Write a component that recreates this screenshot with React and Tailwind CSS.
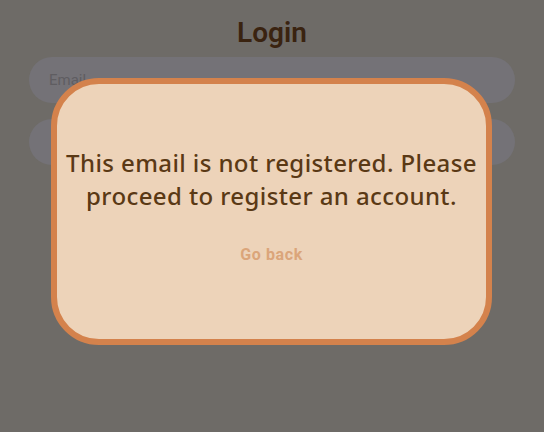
export default function App() {
  return (
    <div className="relative h-[432px] w-[544px] overflow-hidden bg-[#6e6b67] font-['Roboto',sans-serif]">
      {/* login page behind the overlay */}
      <div className="flex flex-col items-center px-[29px] pt-[15px]">
        <h1 className="text-[28px] font-semibold leading-[36px] text-[#3a2310]">Login</h1>
        <div className="mt-[6px] flex h-[46px] w-full items-center rounded-full bg-[#747277] px-[20px]">
          <span className="text-[15px] text-[#5f5d61]">Email</span>
        </div>
        <div className="mt-[16px] h-[46px] w-full rounded-full bg-[#747277]" />
      </div>

      {/* dialog */}
      <div className="absolute left-[51px] top-[78px] flex h-[267px] w-[441px] flex-col items-center rounded-[48px] border-[6px] border-[#d4824c] bg-[#edd3b9] pt-[62px]">
        <p className="text-center font-['Noto_Sans',sans-serif] text-[24px] font-medium leading-[33px] tracking-[0.4px] text-[#5a3915]">
          This email is not registered. Please
          <br />
          proceed to register an account.
        </p>
        <button className="mt-[31px] text-[16px] font-bold tracking-[0.6px] text-[#dba57a]">Go back</button>
      </div>
    </div>
  );
}
